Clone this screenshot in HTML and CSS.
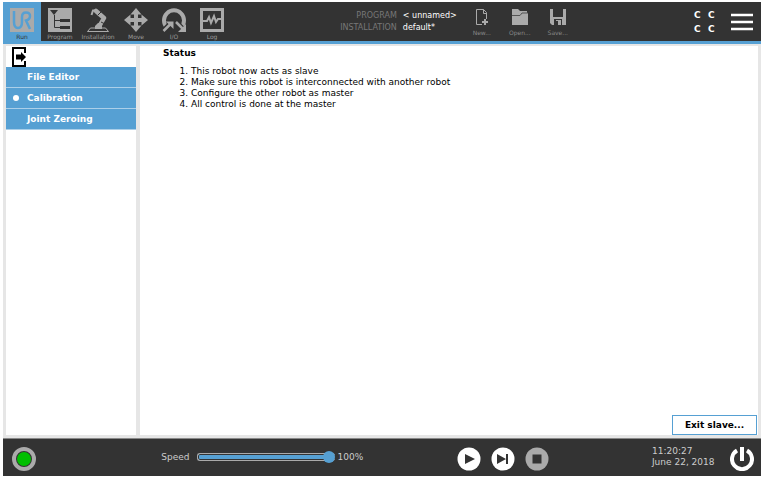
FILE: index.html
```html
<!DOCTYPE html>
<html lang="en">
<head>
<meta charset="utf-8">
<title>Robot slave status</title>
<link rel="stylesheet" href="styles.css">
</head>
<body>
<div class="app">
  <header class="topbar">
    <nav class="tabs">
      <button class="tab active"><svg viewBox="0 0 24 24"><path fill="#aaa" d="M0 0h24v24H0z"/><path d="M4 3v11q0 6 4 6t4-6V9q0-4.500 4-4.500t4 3.500-4 4.500l4 8.500" fill="none" stroke="#56a0d3" stroke-width="2.500"/></svg><span>Run</span></button>
      <button class="tab"><svg viewBox="0 0 24 24"><path fill="#aaa" d="M0 0h24v24H0z"/><path d="M2 2h8L6 7z" fill="#333"/><path d="M6.500 7v12.500H12M6.500 12.500H12" fill="none" stroke="#333"/><path d="M12 11h10v3H12zM12 18h10v3H12z" fill="#333"/></svg><span>Program</span></button>
      <button class="tab"><svg viewBox="0 0 24 24"><path d="M4.500 20h15l3 3.500h-21z" fill="none" stroke="#aaa"/><path d="M9 21v-3l3-3h4v6z" fill="#aaa"/><path d="M10 3l8 7-4 7" fill="none" stroke="#aaa" stroke-width="4.500" stroke-linecap="round" stroke-linejoin="round"/><path d="M10 2.500H7L5.500 7" fill="none" stroke="#aaa" stroke-width="2"/><path d="M12 7l3-3M15 14l4 2" stroke="#333"/></svg><span>Installation</span></button>
      <button class="tab"><svg viewBox="0 0 24 24"><path fill="#aaa" d="M12 0l5.500 6.500H14V10h3.500V6.500L24 12l-6.500 5.500V14H14v3.500h3.500L12 24l-5.500-6.500H10V14H6.500v3.500L0 12l6.500-5.500V10H10V6.500H6.500z"/></svg><span>Move</span></button>
      <button class="tab"><svg viewBox="0 0 24 24"><path d="M5 19.500A10 10 0 1 1 19 19.500" fill="none" stroke="#aaa" stroke-width="4"/><path d="M10 14l-8 8M14 14l7 7" stroke="#333" stroke-width="5"/><path d="M1.500 23l8-8M14 14l8 8" stroke="#aaa" stroke-width="2.500"/><path d="M4 13.500h7.500V21zM24 16v8h-8z" fill="#aaa"/></svg><span>I/O</span></button>
      <button class="tab"><svg viewBox="0 0 24 24"><path d="M1.500 1.500h21v21h-21z" fill="none" stroke="#aaa" stroke-width="3"/><path d="M3 13h4l2-4 2 6 3-7 2 6 2-3h3" fill="none" stroke="#aaa" stroke-width="2"/></svg><span>Log</span></button>
    </nav>
    <dl class="info">
      <dt>PROGRAM</dt><dd>&lt; unnamed&gt;</dd>
      <dt>INSTALLATION</dt><dd>default*</dd>
    </dl>
    <div class="files">
      <button class="file"><svg viewBox="0 0 18 18"><path d="M9 16.500H3.500v-15h7l3 3V11M10.500 1.500v4h3" fill="none" stroke="#aaa"/><path d="M12 11v6M9 14h6" stroke="#aaa" stroke-width="2"/></svg><span>New...</span></button>
      <button class="file"><svg viewBox="0 0 18 18"><path d="M1 1h6l2 2h7v2h1v12H1z" fill="#aaa"/><path d="M1 7.500h8l2-2.500h6" fill="none" stroke="#555"/></svg><span>Open...</span></button>
      <button class="file"><svg viewBox="0 0 18 18"><path d="M1 1h16v16H3l-2-2z" fill="#aaa"/><path d="M4 1h10v8H4zM5 11h8v6H5z" fill="#333"/><path d="M7 12h5v5H9v-4H7z" fill="#aaa"/></svg><span>Save...</span></button>
    </div>
    <div class="checksum"><span>C</span><span>C</span><span>C</span><span>C</span></div>
    <button class="menu" aria-label="Menu"><svg viewBox="0 0 22 18"><path d="M0 2h22M0 9h22M0 16h22" stroke="#fff" stroke-width="2.500"/></svg></button>
  </header>

  <div class="workspace">
    <aside class="sidebar">
      <button class="leave" aria-label="Leave"><svg viewBox="0 0 14 20"><path d="M13 6V1H1v18h12v-5" fill="none" stroke="#000" stroke-width="2"/><path d="M4 7.500h5V5l5 5-5 5v-2.500H4z"/></svg></button>
      <ul class="pages">
        <li><a href="#">File Editor</a></li>
        <li><a href="#" class="current">Calibration</a></li>
        <li><a href="#">Joint Zeroing</a></li>
      </ul>
    </aside>
    <main class="content">
      <h1>Status</h1>
      <ol>
        <li>This robot now acts as slave</li>
        <li>Make sure this robot is interconnected with another robot</li>
        <li>Configure the other robot as master</li>
        <li>All control is done at the master</li>
      </ol>
      <button class="exit">Exit slave...</button>
    </main>
  </div>

  <footer class="bottombar">
    <button class="state" aria-label="Robot state"><svg viewBox="0 0 24 24"><circle cx="12" cy="12" r="10" fill="#333" stroke="#aaa" stroke-width="4"/><circle cx="12" cy="12" r="7" fill="#00bf00"/></svg></button>
    <div class="speed">
      <label for="speed">Speed</label>
      <input id="speed" type="range" min="0" max="100" value="100">
      <output for="speed">100%</output>
    </div>
    <div class="playback">
      <button aria-label="Play"><svg viewBox="0 0 24 24"><circle cx="12" cy="12" r="11.500" fill="#fff"/><path d="M8 7l10 5-10 5z" fill="#333"/></svg></button>
      <button aria-label="Step"><svg viewBox="0 0 24 24"><circle cx="12" cy="12" r="11.500" fill="#fff"/><path d="M6 7l9 5-9 5zM15 7h2v10h-2z" fill="#333"/></svg></button>
      <button aria-label="Stop"><svg viewBox="0 0 24 24"><circle cx="12" cy="12" r="11.500" fill="#aaa"/><path d="M7.500 7.500h9v9h-9z" fill="#333"/></svg></button>
    </div>
    <time class="clock"><span>11:20:27</span><span>June 22, 2018</span></time>
    <button class="power" aria-label="Power"><svg viewBox="0 0 24 24"><path d="M7 3.500a10 10 0 1 0 10 0M12 0v14" fill="none" stroke="#fff" stroke-width="4"/></svg></button>
  </footer>
</div>
</body>
</html>
```
FILE: styles.css
```css
* {
  box-sizing: border-box;
}

body {
  margin: 0;
  font: 9px/11px "DejaVu Sans", sans-serif;
  color: #000;
  background: #fff;
}

button {
  padding: 0;
  border: 0;
  background: none;
  font: inherit;
  color: inherit;
}

svg {
  display: block;
}

.app {
  display: flex;
  flex-direction: column;
  height: 100vh;
  padding: 2px 4px 1px 3px;
}

.topbar {
  display: flex;
  flex: none;
  align-items: flex-start;
  height: 42px;
  background: #333;
  border-bottom: 3px solid #56a0d3;
}

.tabs {
  display: flex;
}

.tab {
  display: flex;
  flex-direction: column;
  align-items: center;
  gap: 1px;
  width: 38px;
  height: 39px;
  padding-top: 6px;
  font-size: 6px;
  line-height: 8px;
  color: #999;
  white-space: nowrap;
}

.tab svg {
  flex: none;
  width: 24px;
  height: 24px;
}

.tab.active {
  background: #56a0d3;
  color: #333;
}

.info {
  display: grid;
  grid-template-columns: auto 60px;
  column-gap: 6px;
  margin: 8px 0 0 auto;
  font-size: 8px;
  line-height: 12px;
  white-space: nowrap;
}

.info dt {
  color: #777;
  text-align: right;
}

.info dd {
  margin: 0;
  color: #fff;
}

.files {
  display: flex;
}

.file {
  display: flex;
  flex-direction: column;
  align-items: center;
  gap: 3px;
  width: 38px;
  padding-top: 6px;
  font-size: 6px;
  line-height: 8px;
  color: #888;
}

.file svg {
  width: 18px;
  height: 18px;
}

.checksum {
  display: grid;
  grid-template-columns: 14px 14px;
  margin: 6px 9px 0 auto;
  padding-left: 8px;
  font-weight: bold;
  line-height: 14px;
  color: #fff;
}

.menu {
  margin: 11px 8px 0 0;
}

.menu svg {
  width: 22px;
  height: 18px;
}

.workspace {
  display: flex;
  flex: 1;
  gap: 4px;
  min-height: 0;
  padding: 2px 3px 3px;
  background: #e6e6e6;
}

.sidebar {
  width: 130px;
  background: #fff;
}

.leave {
  display: block;
  padding: 1px 6px 0;
}

.leave svg {
  width: 14px;
  height: 20px;
}

.pages {
  margin: 0;
  padding: 0;
  list-style: none;
}

.pages a {
  display: block;
  padding-left: 21px;
  border-bottom: 1px solid #abcfe9;
  background: #56a0d3;
  color: #fff;
  font-weight: bold;
  line-height: 20px;
  text-decoration: none;
}

.pages .current {
  display: flex;
  align-items: center;
  gap: 8px;
  padding-left: 7px;
}

.pages .current::before {
  content: "";
  width: 6px;
  height: 6px;
  border-radius: 50%;
  background: #fff;
}

.content {
  display: flex;
  flex: 1;
  flex-direction: column;
  background: #fff;
}

.content h1 {
  margin: 2px 0 7px 23px;
  font-size: 9px;
}

.content ol {
  margin: 0;
  padding-left: 51px;
}

.exit {
  align-self: flex-end;
  width: 85px;
  height: 20px;
  margin: auto 1px 0 0;
  border: 1px solid #56a0d3;
  background: #fff;
  font-weight: bold;
}

.bottombar {
  display: flex;
  flex: none;
  align-items: center;
  height: 38px;
  padding: 3px 7px 0 9px;
  border-top: 1px solid #888;
  background: #333;
  color: #ccc;
}

.state svg,
.playback svg,
.power svg {
  width: 24px;
  height: 24px;
}

.speed {
  display: flex;
  align-items: center;
  margin: 0 auto 4px;
  padding-left: 36px;
}

.speed output {
  width: 30px;
  margin-left: 2px;
}

.speed input {
  appearance: none;
  width: 138px;
  height: 12px;
  margin: 0 0 0 8px;
  background: none;
}

.speed input::-webkit-slider-runnable-track {
  height: 8px;
  border: 1px solid #aaa;
  border-right: 0;
  border-radius: 3px;
  background: #56a0d3;
  box-shadow: inset 0 0 0 1px #333;
}

.speed input::-webkit-slider-thumb {
  appearance: none;
  width: 12px;
  height: 12px;
  margin-top: -3px;
  border-radius: 50%;
  background: #56a0d3;
}

.playback {
  display: flex;
  gap: 10px;
  padding-right: 14px;
}

.clock {
  display: flex;
  flex-direction: column;
  width: 78px;
  margin: 0 0 4px auto;
}
```
